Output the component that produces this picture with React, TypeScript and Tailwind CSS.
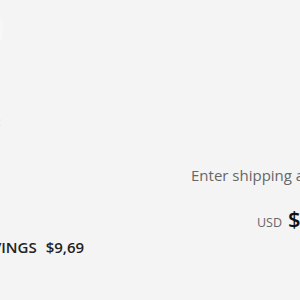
export default function App() {
  return (
    <div
      className="w-[300px] h-[300px] overflow-hidden bg-[#f4f4f4] flex flex-col"
      style={{ fontFamily: '"Open Sans", "Noto Sans", sans-serif' }}
    >
      <div className="flex mt-[17px]">
        <div className="-ml-[37px] w-[40px] h-[26px] rounded-lg bg-[#f7f7f7] shrink-0" />
      </div>
      <div className="flex mt-[69px]">
        <div className="-ml-[60px] w-[61px] shrink-0 text-right text-[13px] leading-[18px] text-[#b0b0b0]">:</div>
      </div>
      <div className="flex mt-[35px] pl-[191px] whitespace-nowrap">
        <span className="text-[15px] leading-[20px] text-[#666]">Enter shipping address</span>
      </div>
      <div className="flex items-baseline mt-[17px] pl-[257px] whitespace-nowrap">
        <span className="text-[12.5px] text-[#666]">USD</span>
        <span className="ml-[6px] text-[22px] font-semibold text-[#111]">$19,38</span>
      </div>
      <div className="flex items-baseline mt-[1px] -ml-[77px] whitespace-nowrap gap-[9px] text-[15px] font-semibold text-[#222]">
        <span>TOTAL SAVINGS</span>
        <span>$9,69</span>
      </div>
    </div>
  );
}
